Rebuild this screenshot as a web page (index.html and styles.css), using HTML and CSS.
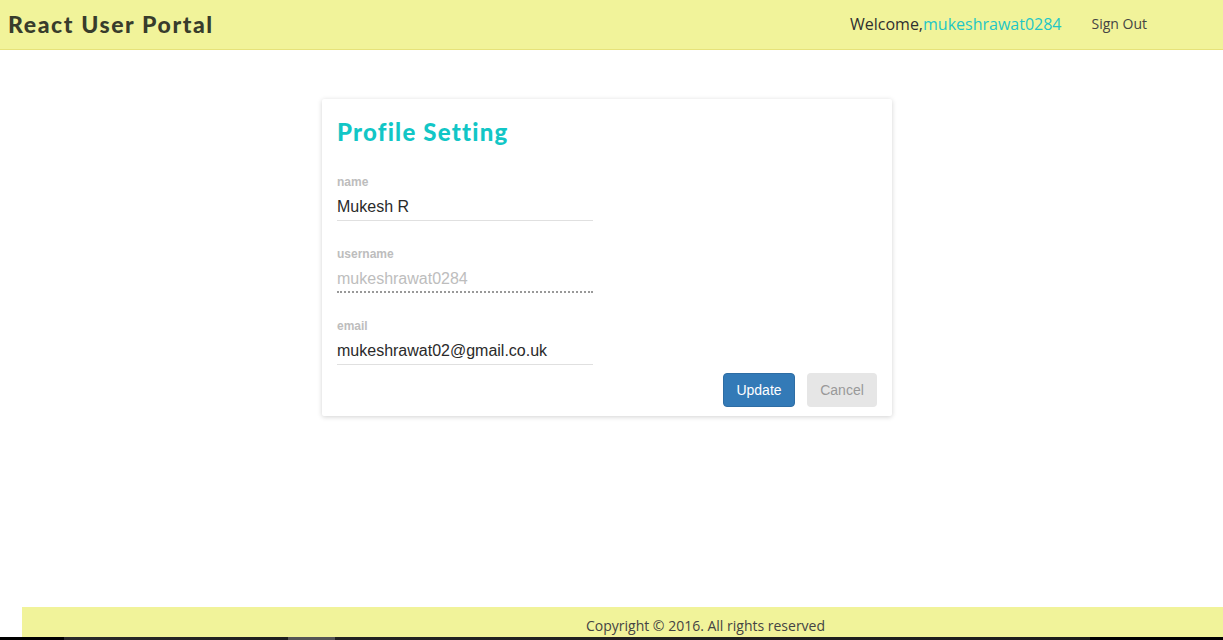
FILE: index.html
```html
<!DOCTYPE html>
<html>
<head>
<meta charset="utf-8">
<title>React User Portal</title>
<link rel="stylesheet" href="styles.css">
</head>
<body>
<div class="page">
  <header class="topbar">
    <div class="brand">React User Portal</div>
    <nav class="nav">
      <span class="welcome">Welcome,<span class="user">mukeshrawat0284</span></span>
      <a class="signout" href="#">Sign Out</a>
    </nav>
  </header>
  <main class="main">
    <section class="card">
      <h1 class="card-title">Profile Setting</h1>
      <div class="field">
        <label class="label">name</label>
        <div class="input">Mukesh R</div>
      </div>
      <div class="field">
        <label class="label">username</label>
        <div class="input disabled">mukeshrawat0284</div>
      </div>
      <div class="field field-last">
        <label class="label">email</label>
        <div class="input">mukeshrawat02@gmail.co.uk</div>
      </div>
      <div class="actions">
        <button class="btn primary">Update</button>
        <button class="btn cancel">Cancel</button>
      </div>
    </section>
  </main>
  <footer class="footer">Copyright © 2016. All rights reserved</footer>
  <div class="strip"></div>
</div>
</body>
</html>
```
FILE: styles.css
```css
html, body {
  margin: 0;
  padding: 0;
  background: #fff;
  overflow: hidden;
}
.page {
  display: flex;
  flex-direction: column;
  min-height: 640px;
}
.topbar {
  height: 49px;
  background: #f1f39a;
  border-bottom: 1px solid #e6e27a;
  display: flex;
  align-items: center;
  justify-content: space-between;
  padding: 0 76px 0 8px;
  box-sizing: content-box;
}
.brand {
  font-family: "Lato", sans-serif;
  font-weight: 900;
  font-size: 23px;
  color: #383c2c;
  letter-spacing: 1.6px;
  margin-top: -2px;
}
.nav {
  display: flex;
  align-items: center;
  gap: 30px;
  margin-top: -2px;
}
.welcome {
  font-family: "Open Sans", sans-serif;
  font-size: 16px;
  color: #2f2f2f;
}
.user {
  color: #1ec6c6;
}
.signout {
  font-family: "Open Sans", sans-serif;
  font-size: 14px;
  color: #444;
  text-decoration: none;
}
.main {
  flex: 1;
  padding: 49px 0 0 322px;
}
.card {
  width: 570px;
  box-sizing: border-box;
  background: #fff;
  box-shadow: 0 1px 5px rgba(0,0,0,0.18);
  border-radius: 2px;
  padding: 18px 15px 9px 15px;
  display: flex;
  flex-direction: column;
}
.card-title {
  margin: 0 0 28px 0;
  font-family: "Lato", sans-serif;
  font-weight: 900;
  font-size: 24px;
  color: #12c6c6;
  letter-spacing: 1.2px;
  line-height: 30px;
}
.field {
  display: flex;
  flex-direction: column;
  width: 256px;
  margin-bottom: 26px;
}
.field-last {
  margin-bottom: 8px;
}
.label {
  font-family: "Liberation Sans", Arial, sans-serif;
  font-weight: bold;
  font-size: 12px;
  color: #bdbdbd;
  line-height: 14px;
  margin-bottom: 8px;
}
.input {
  font-family: "Liberation Sans", Arial, sans-serif;
  font-size: 16px;
  color: #2a2a2a;
  line-height: 20px;
  padding-bottom: 3px;
  border-bottom: 1px solid #e0e0e0;
}
.input.disabled {
  color: #bdbdbd;
  border-bottom: 2px dotted #999;
  padding-bottom: 2px;
}
.actions {
  display: flex;
  justify-content: flex-end;
  gap: 12px;
}
.btn {
  font-family: "Liberation Sans", Arial, sans-serif;
  font-size: 14px;
  height: 34px;
  border-radius: 4px;
  border: 1px solid transparent;
  padding: 0 12px;
  cursor: pointer;
}
.btn.primary {
  background: #337ab7;
  border-color: #2e6da4;
  color: #fff;
  width: 72px;
}
.btn.cancel {
  background: #e6e6e6;
  color: #999;
  width: 70px;
}
.footer {
  margin-left: 22px;
  height: 30px;
  background: #f1f39a;
  font-family: "Open Sans", sans-serif;
  font-size: 14px;
  color: #444;
  display: flex;
  align-items: center;
  justify-content: center;
  padding-left: 166px;
  padding-top: 6px;
  box-sizing: border-box;
}
.strip {
  height: 3px;
  background: linear-gradient(90deg, #000 0, #000 64px, #2a2a2a 64px, #1e1e1e 288px, #555 288px, #555 335px, #222 335px, #1c1c1c 1090px, #000 1090px);
}
```
